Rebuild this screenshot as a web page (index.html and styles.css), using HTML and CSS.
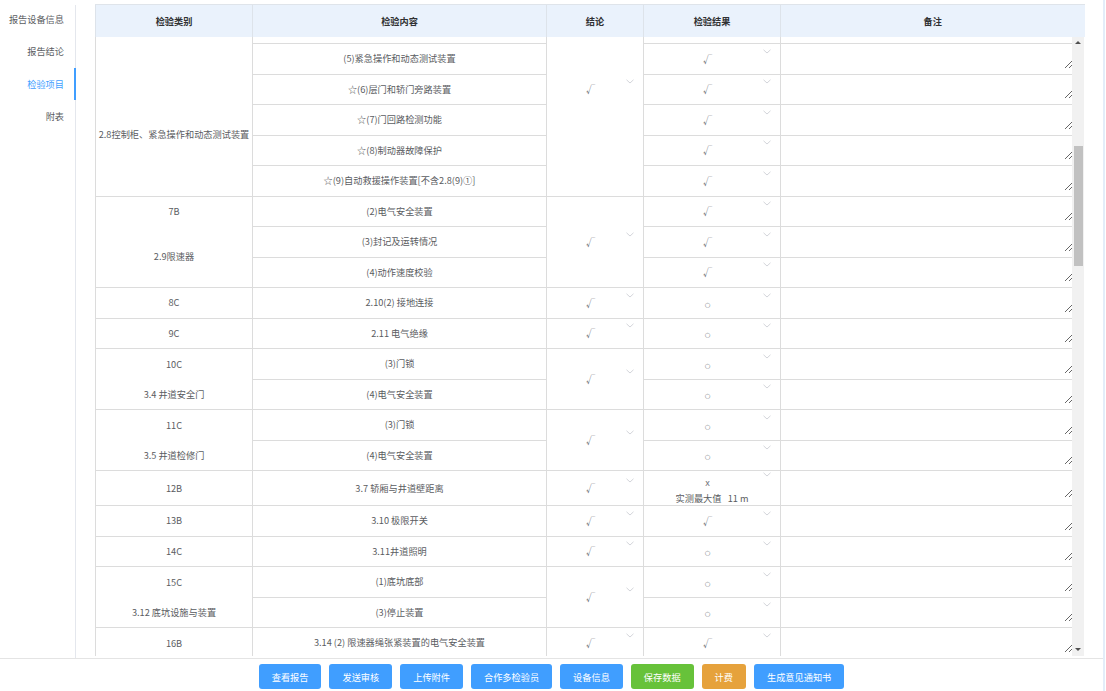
FILE: index.html
```html
<!DOCTYPE html>
<html lang="zh-CN">

<head>
    <meta charset="UTF-8">
    <meta name="viewport" content="width=device-width, initial-scale=1.0">
    <title>检验项目</title>
    <link rel="stylesheet" href="styles.css">
</head>

<body>

    <div class="page">
        <div class="main">
            <ul class="side">
                <li>报告设备信息</li>
                <li>报告结论</li>
                <li class="active">检验项目</li>
                <li>附表</li>
            </ul>

            <div class="content">
                <table class="grid head">
                    <colgroup>
                        <col style="width:157px">
                        <col style="width:294px">
                        <col style="width:97px">
                        <col style="width:137px">
                        <col style="width:304px">
                    </colgroup>
                    <tr>
                        <th>检验类别</th>
                        <th>检验内容</th>
                        <th>结论</th>
                        <th>检验结果</th>
                        <th>备注</th>
                    </tr>
                </table>

                <div class="body-wrap">
                    <div class="body-view">
                        <table class="grid body">
                            <colgroup>
                                <col style="width:157px">
                                <col style="width:294px">
                                <col style="width:97px">
                                <col style="width:137px">
                                <col style="width:292px">
                            </colgroup>

                            <!-- 2.8 (top rows scrolled out) -->
                            <tr class="sliver">
                                <td class="name name-28" rowspan="6">2.8控制柜、紧急操作和动态测试装置</td>
                                <td></td>
                                <td class="sel sel-28" rowspan="6">
                                    <div class="select"><span>√</span><svg class="arr" width="8" height="5" viewBox="0 0 8 5"><path d="M0.5 0.8 L4 4 L7.5 0.8" /></svg></div>
                                </td>
                                <td></td>
                                <td class="note"></td>
                            </tr>
                            <tr>
                                <td>(5)紧急操作和动态测试装置</td>
                                <td class="sel"><div class="select"><span>√</span><svg class="arr" width="8" height="5" viewBox="0 0 8 5"><path d="M0.5 0.8 L4 4 L7.5 0.8" /></svg></div></td>
                                <td class="note"><textarea></textarea></td>
                            </tr>
                            <tr>
                                <td>☆(6)层门和轿门旁路装置</td>
                                <td class="sel"><div class="select"><span>√</span><svg class="arr" width="8" height="5" viewBox="0 0 8 5"><path d="M0.5 0.8 L4 4 L7.5 0.8" /></svg></div></td>
                                <td class="note"><textarea></textarea></td>
                            </tr>
                            <tr>
                                <td>☆(7)门回路检测功能</td>
                                <td class="sel"><div class="select"><span>√</span><svg class="arr" width="8" height="5" viewBox="0 0 8 5"><path d="M0.5 0.8 L4 4 L7.5 0.8" /></svg></div></td>
                                <td class="note"><textarea></textarea></td>
                            </tr>
                            <tr>
                                <td>☆(8)制动器故障保护</td>
                                <td class="sel"><div class="select"><span>√</span><svg class="arr" width="8" height="5" viewBox="0 0 8 5"><path d="M0.5 0.8 L4 4 L7.5 0.8" /></svg></div></td>
                                <td class="note"><textarea></textarea></td>
                            </tr>
                            <tr>
                                <td>☆(9)自动救援操作装置[不含2.8(9)①]</td>
                                <td class="sel"><div class="select"><span>√</span><svg class="arr" width="8" height="5" viewBox="0 0 8 5"><path d="M0.5 0.8 L4 4 L7.5 0.8" /></svg></div></td>
                                <td class="note"><textarea></textarea></td>
                            </tr>

                            <!-- 2.9 -->
                            <tr>
                                <td class="code">7B</td>
                                <td>(2)电气安全装置</td>
                                <td class="sel" rowspan="3"><div class="select"><span>√</span><svg class="arr" width="8" height="5" viewBox="0 0 8 5"><path d="M0.5 0.8 L4 4 L7.5 0.8" /></svg></div></td>
                                <td class="sel"><div class="select"><span>√</span><svg class="arr" width="8" height="5" viewBox="0 0 8 5"><path d="M0.5 0.8 L4 4 L7.5 0.8" /></svg></div></td>
                                <td class="note"><textarea></textarea></td>
                            </tr>
                            <tr>
                                <td class="name" rowspan="2">2.9限速器</td>
                                <td>(3)封记及运转情况</td>
                                <td class="sel"><div class="select"><span>√</span><svg class="arr" width="8" height="5" viewBox="0 0 8 5"><path d="M0.5 0.8 L4 4 L7.5 0.8" /></svg></div></td>
                                <td class="note"><textarea></textarea></td>
                            </tr>
                            <tr>
                                <td>(4)动作速度校验</td>
                                <td class="sel"><div class="select"><span>√</span><svg class="arr" width="8" height="5" viewBox="0 0 8 5"><path d="M0.5 0.8 L4 4 L7.5 0.8" /></svg></div></td>
                                <td class="note"><textarea></textarea></td>
                            </tr>

                            <tr>
                                <td class="code">8C</td>
                                <td>2.10(2) 接地连接</td>
                                <td class="sel"><div class="select"><span>√</span><svg class="arr" width="8" height="5" viewBox="0 0 8 5"><path d="M0.5 0.8 L4 4 L7.5 0.8" /></svg></div></td>
                                <td class="sel"><div class="select"><span class="na">○</span><svg class="arr" width="8" height="5" viewBox="0 0 8 5"><path d="M0.5 0.8 L4 4 L7.5 0.8" /></svg></div></td>
                                <td class="note"><textarea></textarea></td>
                            </tr>
                            <tr>
                                <td class="code">9C</td>
                                <td>2.11 电气绝缘</td>
                                <td class="sel"><div class="select"><span>√</span><svg class="arr" width="8" height="5" viewBox="0 0 8 5"><path d="M0.5 0.8 L4 4 L7.5 0.8" /></svg></div></td>
                                <td class="sel"><div class="select"><span class="na">○</span><svg class="arr" width="8" height="5" viewBox="0 0 8 5"><path d="M0.5 0.8 L4 4 L7.5 0.8" /></svg></div></td>
                                <td class="note"><textarea></textarea></td>
                            </tr>

                            <!-- 3.4 -->
                            <tr>
                                <td class="code">10C</td>
                                <td>(3)门锁</td>
                                <td class="sel" rowspan="2"><div class="select"><span>√</span><svg class="arr" width="8" height="5" viewBox="0 0 8 5"><path d="M0.5 0.8 L4 4 L7.5 0.8" /></svg></div></td>
                                <td class="sel"><div class="select"><span class="na">○</span><svg class="arr" width="8" height="5" viewBox="0 0 8 5"><path d="M0.5 0.8 L4 4 L7.5 0.8" /></svg></div></td>
                                <td class="note"><textarea></textarea></td>
                            </tr>
                            <tr>
                                <td class="name">3.4 井道安全门</td>
                                <td>(4)电气安全装置</td>
                                <td class="sel"><div class="select"><span class="na">○</span><svg class="arr" width="8" height="5" viewBox="0 0 8 5"><path d="M0.5 0.8 L4 4 L7.5 0.8" /></svg></div></td>
                                <td class="note"><textarea></textarea></td>
                            </tr>

                            <!-- 3.5 -->
                            <tr>
                                <td class="code">11C</td>
                                <td>(3)门锁</td>
                                <td class="sel" rowspan="2"><div class="select"><span>√</span><svg class="arr" width="8" height="5" viewBox="0 0 8 5"><path d="M0.5 0.8 L4 4 L7.5 0.8" /></svg></div></td>
                                <td class="sel"><div class="select"><span class="na">○</span><svg class="arr" width="8" height="5" viewBox="0 0 8 5"><path d="M0.5 0.8 L4 4 L7.5 0.8" /></svg></div></td>
                                <td class="note"><textarea></textarea></td>
                            </tr>
                            <tr>
                                <td class="name">3.5 井道检修门</td>
                                <td>(4)电气安全装置</td>
                                <td class="sel"><div class="select"><span class="na">○</span><svg class="arr" width="8" height="5" viewBox="0 0 8 5"><path d="M0.5 0.8 L4 4 L7.5 0.8" /></svg></div></td>
                                <td class="note"><textarea></textarea></td>
                            </tr>

                            <tr class="tall">
                                <td class="code">12B</td>
                                <td>3.7 轿厢与井道壁距离</td>
                                <td class="sel"><div class="select"><span>√</span><svg class="arr" width="8" height="5" viewBox="0 0 8 5"><path d="M0.5 0.8 L4 4 L7.5 0.8" /></svg></div></td>
                                <td class="sel">
                                    <div class="select"><span>x</span><svg class="arr" width="8" height="5" viewBox="0 0 8 5"><path d="M0.5 0.8 L4 4 L7.5 0.8" /></svg></div>
                                    <div class="measure">实测最大值&nbsp;&nbsp;&nbsp;11 m</div>
                                </td>
                                <td class="note"><textarea></textarea></td>
                            </tr>
                            <tr>
                                <td class="code">13B</td>
                                <td>3.10 极限开关</td>
                                <td class="sel"><div class="select"><span>√</span><svg class="arr" width="8" height="5" viewBox="0 0 8 5"><path d="M0.5 0.8 L4 4 L7.5 0.8" /></svg></div></td>
                                <td class="sel"><div class="select"><span>√</span><svg class="arr" width="8" height="5" viewBox="0 0 8 5"><path d="M0.5 0.8 L4 4 L7.5 0.8" /></svg></div></td>
                                <td class="note"><textarea></textarea></td>
                            </tr>
                            <tr>
                                <td class="code">14C</td>
                                <td>3.11井道照明</td>
                                <td class="sel"><div class="select"><span>√</span><svg class="arr" width="8" height="5" viewBox="0 0 8 5"><path d="M0.5 0.8 L4 4 L7.5 0.8" /></svg></div></td>
                                <td class="sel"><div class="select"><span class="na">○</span><svg class="arr" width="8" height="5" viewBox="0 0 8 5"><path d="M0.5 0.8 L4 4 L7.5 0.8" /></svg></div></td>
                                <td class="note"><textarea></textarea></td>
                            </tr>

                            <!-- 3.12 -->
                            <tr>
                                <td class="code">15C</td>
                                <td>(1)底坑底部</td>
                                <td class="sel" rowspan="2"><div class="select"><span>√</span><svg class="arr" width="8" height="5" viewBox="0 0 8 5"><path d="M0.5 0.8 L4 4 L7.5 0.8" /></svg></div></td>
                                <td class="sel"><div class="select"><span class="na">○</span><svg class="arr" width="8" height="5" viewBox="0 0 8 5"><path d="M0.5 0.8 L4 4 L7.5 0.8" /></svg></div></td>
                                <td class="note"><textarea></textarea></td>
                            </tr>
                            <tr>
                                <td class="name">3.12 底坑设施与装置</td>
                                <td>(3)停止装置</td>
                                <td class="sel"><div class="select"><span class="na">○</span><svg class="arr" width="8" height="5" viewBox="0 0 8 5"><path d="M0.5 0.8 L4 4 L7.5 0.8" /></svg></div></td>
                                <td class="note"><textarea></textarea></td>
                            </tr>

                            <tr>
                                <td class="code">16B</td>
                                <td>3.14 (2) 限速器绳张紧装置的电气安全装置</td>
                                <td class="sel"><div class="select"><span>√</span><svg class="arr" width="8" height="5" viewBox="0 0 8 5"><path d="M0.5 0.8 L4 4 L7.5 0.8" /></svg></div></td>
                                <td class="sel"><div class="select"><span>√</span><svg class="arr" width="8" height="5" viewBox="0 0 8 5"><path d="M0.5 0.8 L4 4 L7.5 0.8" /></svg></div></td>
                                <td class="note"><textarea></textarea></td>
                            </tr>
                        </table>
                    </div>

                    <div class="vscroll">
                        <div class="sb-btn"><i class="tri-up"></i></div>
                        <div class="sb-track"><div class="sb-thumb"></div></div>
                        <div class="sb-btn"><i class="tri-down"></i></div>
                    </div>
                </div>
            </div>
        </div>

        <div class="footer">
            <button class="btn">查看报告</button>
            <button class="btn">发送审核</button>
            <button class="btn">上传附件</button>
            <button class="btn">合作多检验员</button>
            <button class="btn">设备信息</button>
            <button class="btn btn-green">保存数据</button>
            <button class="btn btn-orange">计费</button>
            <button class="btn">生成意见通知书</button>
        </div>
    </div>

</body>

</html>
```

FILE: styles.css
```css
* {
    box-sizing: border-box;
    margin: 0;
    padding: 0;
}

body {
    font-family: "Noto Sans CJK SC", "Liberation Sans", sans-serif;
    font-size: 9.2px;
    color: #5a5c61;
    background: #fff;
}

.page {
    width: 1105px;
    height: 691px;
    border-right: 2px solid #e3edf9;
    display: flex;
    flex-direction: column;
}

.main {
    height: 659px;
    display: flex;
    border-bottom: 1px solid #e4e4e4;
}

/* left menu */
.side {
    width: 76px;
    flex-shrink: 0;
    margin-top: 5px;
    border-right: 1px solid #e4e7ed;
    list-style: none;
}

.side li {
    height: 32.3px;
    line-height: 32.3px;
    text-align: right;
    padding-right: 11px;
}

.side li:first-child {
    margin-top: -2px;
}

.side li.active {
    color: #409eff;
    border-right: 2px solid #409eff;
    margin-right: -1px;
    padding-right: 10px;
}

/* table */
.content {
    margin-left: 19px;
    padding-top: 4px;
    width: 989px;
    display: flex;
    flex-direction: column;
}

.grid {
    border-collapse: collapse;
    table-layout: fixed;
}

.head {
    width: 989px;
    background: #eaf2fc;
}

.head th {
    height: 32px;
    border-top: 1px solid #dfe4ea;
    border-left: 1px solid #dde3ea;
    font-weight: bold;
    color: #303133;
}

.body-wrap {
    display: flex;
    height: 619px;
}

.body-view {
    width: 977px;
    overflow: hidden;
}

.body {
    width: 977px;
}

.body tr {
    height: 30.5px;
}

.body tr.sliver {
    height: 7px;
}

.body tr.tall {
    height: 35px;
}

.body td {
    border: 1px solid #dcdcdc;
    text-align: center;
    padding: 0 2px;
    line-height: 13px;
    white-space: nowrap;
}

.body tr:first-child td {
    border-top: none;
}

.body td:last-child {
    border-right: none;
}

.body td.code {
    border-bottom: none;
}

.body td.name {
    border-top: none;
}

.body td.name-28 {
    vertical-align: top;
    padding-top: 91px;
}

.body td.sel {
    padding: 0;
}

.body td.sel-28 {
    vertical-align: top;
    padding-top: 42px;
}

.select {
    position: relative;
    height: 20px;
    line-height: 20px;
    padding-right: 9px;
    color: #707378;
}

.select .arr {
    position: absolute;
    right: 9px;
    top: 0;
}

.select .arr path {
    fill: none;
    stroke: #c8cad0;
    stroke-width: 0.8;
}

.select .na {
    font-family: "DejaVu Sans", sans-serif;
    font-size: 6.5px;
}

.measure {
    line-height: 13px;
}

.body td.note {
    padding: 0;
}

.note textarea {
    display: block;
    width: 100%;
    height: 20px;
    border: 0;
    outline: none;
    resize: vertical;
    background: transparent;
    font: inherit;
}

/* fake scrollbar of the table body */
.vscroll {
    width: 12px;
    background: #f1f1f1;
    display: flex;
    flex-direction: column;
}

.sb-btn {
    height: 12px;
    display: flex;
    align-items: center;
    justify-content: center;
}

.tri-up {
    border-left: 3px solid transparent;
    border-right: 3px solid transparent;
    border-bottom: 3px solid #505050;
}

.tri-down {
    border-left: 3px solid transparent;
    border-right: 3px solid transparent;
    border-top: 3px solid #505050;
}

.sb-track {
    flex: 1;
}

.sb-thumb {
    margin: 97px auto 0;
    width: 9px;
    height: 120px;
    background: #c1c1c1;
}

/* buttons */
.footer {
    display: flex;
    justify-content: center;
    gap: 8px;
    padding-top: 5px;
}

.btn {
    height: 25px;
    padding: 0 13px;
    border: none;
    border-radius: 3px;
    background: #409eff;
    color: #fff;
    font: inherit;
    cursor: pointer;
}

.btn-green {
    background: #67c23a;
}

.btn-orange {
    background: #e6a23c;
}
```
